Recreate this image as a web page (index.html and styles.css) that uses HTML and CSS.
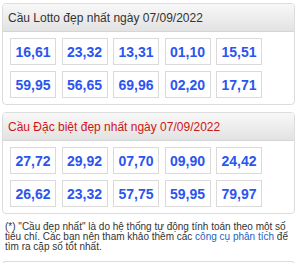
FILE: index.html
```html
<!DOCTYPE html>
<html lang="vi">
<head>
<meta charset="utf-8">
<link rel="stylesheet" href="styles.css">
</head>
<body>
<div class="panel">
  <div class="panel-head">Cầu Lotto đẹp nhất ngày 07/09/2022</div>
  <div class="panel-body">
    <div class="cell">16,61</div>
    <div class="cell">23,32</div>
    <div class="cell">13,31</div>
    <div class="cell">01,10</div>
    <div class="cell">15,51</div>
    <div class="cell">59,95</div>
    <div class="cell">56,65</div>
    <div class="cell">69,96</div>
    <div class="cell">02,20</div>
    <div class="cell">17,71</div>
  </div>
</div>
<div class="panel panel-second">
  <div class="panel-head red">Cầu Đặc biệt đẹp nhất ngày 07/09/2022</div>
  <div class="panel-body">
    <div class="cell">27,72</div>
    <div class="cell">29,92</div>
    <div class="cell">07,70</div>
    <div class="cell">09,90</div>
    <div class="cell">24,42</div>
    <div class="cell">26,62</div>
    <div class="cell">23,32</div>
    <div class="cell">57,75</div>
    <div class="cell">59,95</div>
    <div class="cell">79,97</div>
  </div>
</div>
<p class="note">(*) "Cầu đẹp nhất" là do hệ thống tự động tính toán theo một số tiêu chí. Các bạn nên tham khảo thêm các <a href="#">công cụ phân tích</a> để tìm ra cặp số tốt nhất.</p>
<div class="panel panel-next"></div>
</body>
</html>
```
FILE: styles.css
```css
html, body {
  margin: 0;
  padding: 0;
  background: #fff;
  font-family: "Liberation Sans", Arial, sans-serif;
}
.panel {
  margin: 3px 5px 0 2px;
  border: 1px solid #dcdcdc;
  border-radius: 4px;
  background: #fff;
  overflow: hidden;
}
.panel-second {
  margin-top: 7px;
}
.panel-head {
  height: 27px;
  line-height: 28px;
  padding-left: 5px;
  font-size: 12px;
  color: #333;
  background: linear-gradient(#f8f8f8, #e2e2e2);
  border-bottom: 1px solid #d6d6d6;
}
.panel-head.red {
  color: #d01515;
}
.panel-body {
  display: grid;
  grid-template-columns: repeat(5, 46px);
  column-gap: 5.5px;
  row-gap: 6px;
  padding: 6px 7px 6px 7px;
}
.cell {
  height: 25px;
  line-height: 26px;
  border: 1px solid #dadada;
  text-align: center;
  font-size: 14px;
  font-weight: bold;
  color: #2b55ee;
}
.note {
  margin: 8px 3px 0 5px;
  font-size: 10px;
  line-height: 10px;
  color: #333;
}
.note a {
  color: #2362c0;
  text-decoration: none;
}
.panel-next {
  margin-top: 9px;
  height: 20px;
  border-bottom: none;
  border-radius: 4px 4px 0 0;
}
```
